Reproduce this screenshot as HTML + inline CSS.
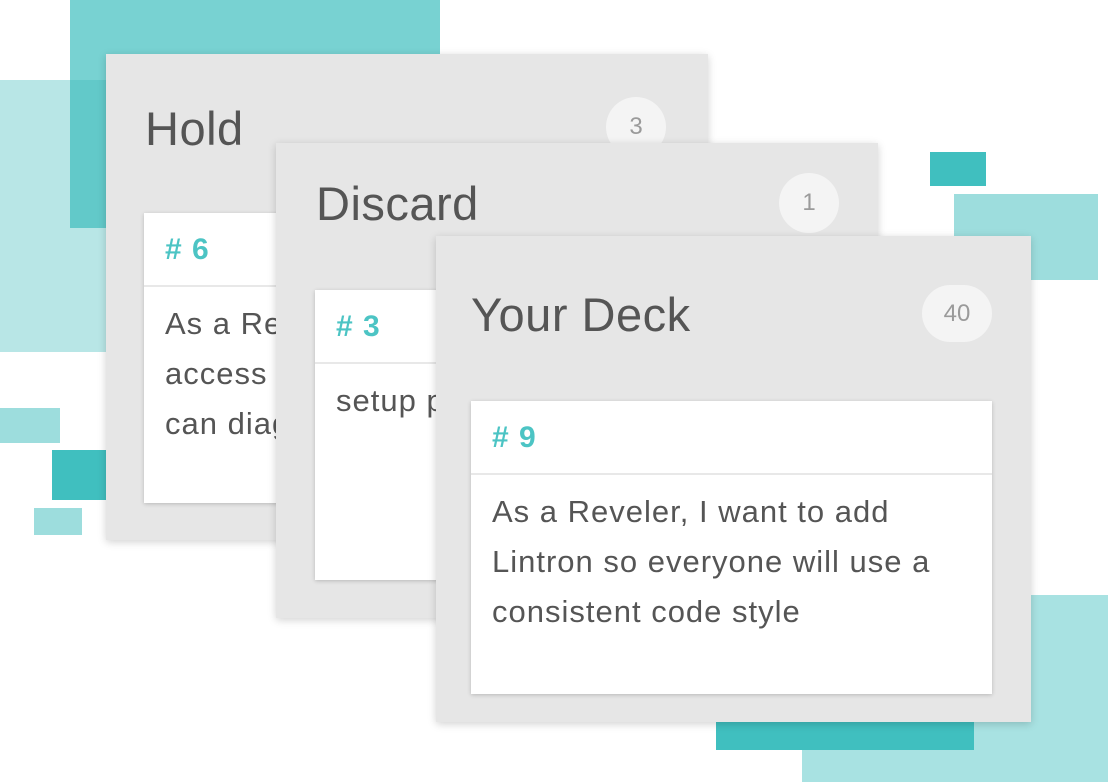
<!DOCTYPE html>
<html><head><style>
*{margin:0;padding:0;box-sizing:border-box}
body{width:1108px;height:782px;background:#fff;position:relative;overflow:hidden;font-family:"Liberation Sans",sans-serif}
.r{position:absolute}
.p{position:absolute;background:#e6e6e6;box-shadow:0 2px 8px rgba(0,0,0,.18)}
.t{position:absolute;font-size:47px;color:#555;line-height:1;letter-spacing:0.5px}
.b{position:absolute;background:#f4f4f4;border-radius:30px;color:#9a9a9a;font-size:24px;text-align:center}
.c{position:absolute;background:#fff;box-shadow:0 1px 4px rgba(0,0,0,.2);overflow:hidden}
.h{height:74px;border-bottom:2px solid #e8e8e8;padding-left:21px;font-weight:bold;color:#4cc4c4;font-size:30px;letter-spacing:1px;line-height:74px}
.x{padding:12px 0 0 21px;font-size:31px;letter-spacing:1px;color:#555;line-height:50px;white-space:nowrap}
</style></head><body>
<div class="r" style="left:0;top:80px;width:106px;height:272px;background:#b8e6e6"></div>
<div class="r" style="left:70px;top:0;width:370px;height:228px;background:#78d2d2"></div>
<div class="r" style="left:70px;top:80px;width:36px;height:148px;background:#62c9c9"></div>
<div class="r" style="left:0;top:408px;width:60px;height:35px;background:#9ddddd"></div>
<div class="r" style="left:52px;top:450px;width:54px;height:50px;background:#40bfbf"></div>
<div class="r" style="left:34px;top:508px;width:48px;height:27px;background:#9ddddd"></div>
<div class="r" style="left:930px;top:152px;width:56px;height:34px;background:#40bfbf"></div>
<div class="r" style="left:954px;top:194px;width:144px;height:86px;background:#9ddddd"></div>
<div class="r" style="left:802px;top:595px;width:306px;height:187px;background:#a8e2e2"></div>
<div class="r" style="left:716px;top:700px;width:258px;height:50px;background:#40bfbf"></div>

<div class="p" style="left:106px;top:54px;width:602px;height:486px">
<div class="t" style="left:39px;top:51px">Hold</div>
<div class="b" style="left:500px;top:43px;width:60px;height:60px;line-height:60px">3</div>
<div class="c" style="left:38px;top:159px;width:420px;height:290px">
<div class="h"># 6</div>
<div class="x">As a Reveler, I want<br>access to logs so I<br>can diagnose</div></div>
</div>

<div class="p" style="left:276px;top:143px;width:602px;height:475px">
<div class="t" style="left:40px;top:37px">Discard</div>
<div class="b" style="left:503px;top:30px;width:60px;height:60px;line-height:60px">1</div>
<div class="c" style="left:39px;top:147px;width:420px;height:290px">
<div class="h"># 3</div>
<div class="x">setup project</div></div>
</div>

<div class="p" style="left:436px;top:236px;width:595px;height:486px">
<div class="t" style="left:35px;top:55px">Your Deck</div>
<div class="b" style="left:486px;top:49px;width:70px;height:57px;line-height:57px">40</div>
<div class="c" style="left:35px;top:165px;width:521px;height:293px">
<div class="h"># 9</div>
<div class="x">As a Reveler, I want to add<br>Lintron so everyone will use a<br>consistent code style</div></div>
</div>
</body></html>
